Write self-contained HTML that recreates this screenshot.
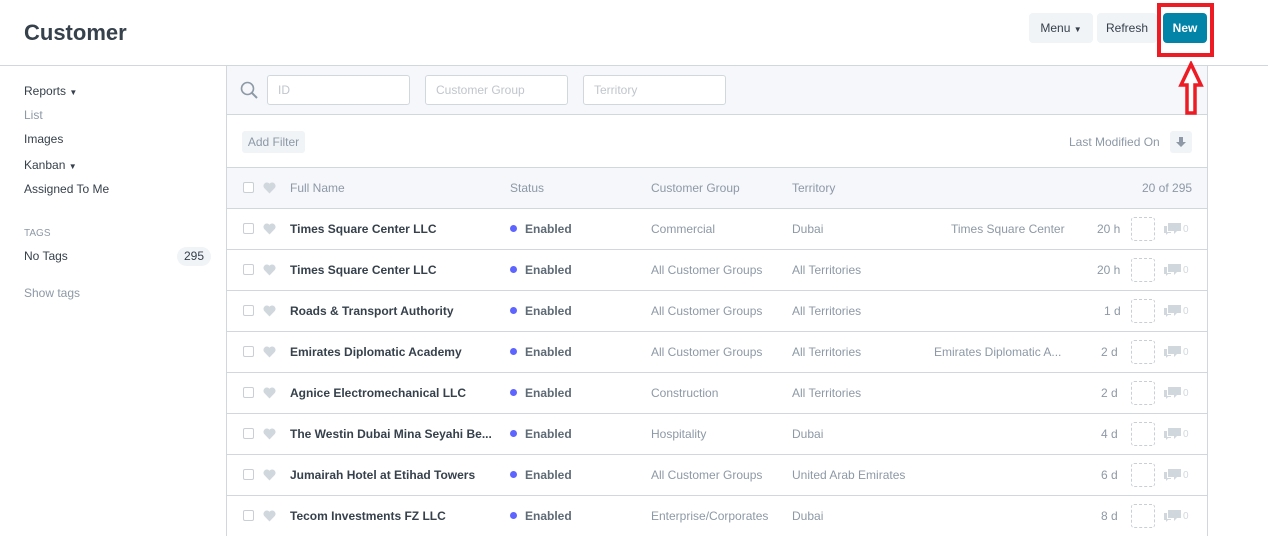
<!DOCTYPE html>
<html><head><style>
*{box-sizing:border-box;margin:0;padding:0}
body{width:1268px;height:535px;overflow:hidden;background:#fff;font-family:"Liberation Sans",sans-serif;font-size:12px;color:#36414c;position:relative}
.a{position:absolute;white-space:nowrap}
.btn{position:absolute;top:13px;height:30px;border-radius:4px;background:#f0f4f7;color:#36414c;font-size:12px;line-height:30px;text-align:center}
.inp{position:absolute;top:75px;height:30px;border:1px solid #d1d8dd;border-radius:3px;background:#fff;color:#c0c6cc;line-height:28px;padding-left:10px;font-size:12px}
.row{position:absolute;left:227px;width:980px;height:41px;border-top:1px solid #d1d8dd}
.cb{position:absolute;left:16px;top:14px;width:11px;height:11px;border:1px solid #c8cfd5;border-radius:2px;background:#fff}
.ht{position:absolute;left:36px;top:14px}
.row .a{top:13px}
.nm{left:63px;font-weight:bold;color:#36414c}
.st{left:283px;font-weight:bold;color:#5e6a75}
.st:before{content:"";display:inline-block;width:7px;height:7px;border-radius:50%;background:#5e64ff;margin-right:8px;vertical-align:1px}
.g{color:#8d99a6}
.dash{position:absolute;left:904px;top:8px;width:24px;height:24px;border:1px dashed #c8cfd5;border-radius:3px}
.cm{position:absolute;left:937px;top:14px}
.z{position:absolute;left:956px;top:15px;color:#d1d8dd;font-size:10px}
</style></head><body>
<div class="a" style="left:24px;top:20px;font-size:22px;font-weight:bold;color:#36414c">Customer</div>
<div class="btn" style="left:1029px;width:64px">Menu <span style="font-size:8px">▼</span></div>
<div class="btn" style="left:1097px;width:60px">Refresh</div>
<div class="btn" style="left:1163px;width:44px;background:#0283a8;color:#fff;font-weight:bold">New</div>
<div class="a" style="left:1157px;top:3px;width:57px;height:54px;border:4px solid #ed1c24"></div>
<div class="a" style="left:0;top:65px;width:1268px;height:1px;background:#d1d8dd"></div>

<div class="a" style="left:24px;top:84px">Reports <span style="font-size:8px">▼</span></div>
<div class="a g" style="left:24px;top:108px">List</div>
<div class="a" style="left:24px;top:132px">Images</div>
<div class="a" style="left:24px;top:158px">Kanban <span style="font-size:8px">▼</span></div>
<div class="a" style="left:24px;top:182px">Assigned To Me</div>
<div class="a g" style="left:24px;top:228px;font-size:10px">TAGS</div>
<div class="a" style="left:24px;top:249px">No Tags</div>
<div class="a" style="left:177px;top:247px;width:34px;height:19px;border-radius:10px;background:#f0f4f7;text-align:center;line-height:19px">295</div>
<div class="a g" style="left:24px;top:286px">Show tags</div>

<div class="a" style="left:226px;top:66px;width:982px;height:470px;border-left:1px solid #d1d8dd;border-right:1px solid #d1d8dd"></div>
<div class="a" style="left:227px;top:66px;width:980px;height:49px;background:#f5f7fa;border-bottom:1px solid #d1d8dd"></div>
<svg class="a" style="left:240px;top:81px" width="19" height="19" viewBox="0 0 19 19"><circle cx="7.5" cy="7.5" r="6" fill="none" stroke="#8d99a6" stroke-width="1.6"/><path d="M12 12 L17 17" stroke="#8d99a6" stroke-width="2"/></svg>
<div class="inp" style="left:267px;width:143px">ID</div>
<div class="inp" style="left:425px;width:143px">Customer Group</div>
<div class="inp" style="left:583px;width:143px">Territory</div>
<div class="a" style="left:242px;top:131px;width:63px;height:22px;background:#f0f4f7;border-radius:3px;color:#8d99a6;line-height:22px;text-align:center">Add Filter</div>
<div class="a g" style="left:1069px;top:135px">Last Modified On</div>
<div class="a" style="left:1170px;top:131px;width:22px;height:22px;background:#f0f4f7;border-radius:3px"><svg style="position:absolute;left:6px;top:6px" width="10" height="10" viewBox="0 0 10 10"><path d="M3 0h4v5h3l-5 5-5-5h3z" fill="#8d99a6"/></svg></div>

<div class="row" style="top:167px;height:41px;background:#f5f7fa">
<div class="cb"></div><svg class="ht" width="13" height="12" viewBox="0 0 13 12"><path d="M6.5 11.5 L1.2 6 A3 3 0 0 1 6.5 1.8 A3 3 0 0 1 11.8 6 Z" fill="#d1d8dd"/></svg>
<div class="a g" style="left:63px">Full Name</div><div class="a g" style="left:283px">Status</div><div class="a g" style="left:424px">Customer Group</div><div class="a g" style="left:565px">Territory</div><div class="a g" style="left:915px">20 of 295</div>
</div>

<div class="row" style="top:208px"><div class="cb"></div><svg class="ht" width="13" height="12" viewBox="0 0 13 12"><path d="M6.5 11.5 L1.2 6 A3 3 0 0 1 6.5 1.8 A3 3 0 0 1 11.8 6 Z" fill="#d1d8dd"/></svg><div class="a nm">Times Square Center LLC</div><div class="a st">Enabled</div><div class="a g" style="left:424px">Commercial</div><div class="a g" style="left:565px">Dubai</div><div class="a g" style="left:724px">Times Square Center</div><div class="a g" style="left:870px">20 h</div><div class="dash"></div><svg class="cm" width="17" height="12" viewBox="0 0 17 12"><path d="M4 0h13v8h-4l-3 3v-3h-6z M0 3h3v6h4v1h-3l-2 2v-2h-2z" fill="#d1d8dd"/></svg><div class="z">0</div></div>
<div class="row" style="top:249px"><div class="cb"></div><svg class="ht" width="13" height="12" viewBox="0 0 13 12"><path d="M6.5 11.5 L1.2 6 A3 3 0 0 1 6.5 1.8 A3 3 0 0 1 11.8 6 Z" fill="#d1d8dd"/></svg><div class="a nm">Times Square Center LLC</div><div class="a st">Enabled</div><div class="a g" style="left:424px">All Customer Groups</div><div class="a g" style="left:565px">All Territories</div><div class="a g" style="left:870px">20 h</div><div class="dash"></div><svg class="cm" width="17" height="12" viewBox="0 0 17 12"><path d="M4 0h13v8h-4l-3 3v-3h-6z M0 3h3v6h4v1h-3l-2 2v-2h-2z" fill="#d1d8dd"/></svg><div class="z">0</div></div>
<div class="row" style="top:290px"><div class="cb"></div><svg class="ht" width="13" height="12" viewBox="0 0 13 12"><path d="M6.5 11.5 L1.2 6 A3 3 0 0 1 6.5 1.8 A3 3 0 0 1 11.8 6 Z" fill="#d1d8dd"/></svg><div class="a nm">Roads &amp; Transport Authority</div><div class="a st">Enabled</div><div class="a g" style="left:424px">All Customer Groups</div><div class="a g" style="left:565px">All Territories</div><div class="a g" style="left:877px">1 d</div><div class="dash"></div><svg class="cm" width="17" height="12" viewBox="0 0 17 12"><path d="M4 0h13v8h-4l-3 3v-3h-6z M0 3h3v6h4v1h-3l-2 2v-2h-2z" fill="#d1d8dd"/></svg><div class="z">0</div></div>
<div class="row" style="top:331px"><div class="cb"></div><svg class="ht" width="13" height="12" viewBox="0 0 13 12"><path d="M6.5 11.5 L1.2 6 A3 3 0 0 1 6.5 1.8 A3 3 0 0 1 11.8 6 Z" fill="#d1d8dd"/></svg><div class="a nm">Emirates Diplomatic Academy</div><div class="a st">Enabled</div><div class="a g" style="left:424px">All Customer Groups</div><div class="a g" style="left:565px">All Territories</div><div class="a g" style="left:707px">Emirates Diplomatic A...</div><div class="a g" style="left:874px">2 d</div><div class="dash"></div><svg class="cm" width="17" height="12" viewBox="0 0 17 12"><path d="M4 0h13v8h-4l-3 3v-3h-6z M0 3h3v6h4v1h-3l-2 2v-2h-2z" fill="#d1d8dd"/></svg><div class="z">0</div></div>
<div class="row" style="top:372px"><div class="cb"></div><svg class="ht" width="13" height="12" viewBox="0 0 13 12"><path d="M6.5 11.5 L1.2 6 A3 3 0 0 1 6.5 1.8 A3 3 0 0 1 11.8 6 Z" fill="#d1d8dd"/></svg><div class="a nm">Agnice Electromechanical LLC</div><div class="a st">Enabled</div><div class="a g" style="left:424px">Construction</div><div class="a g" style="left:565px">All Territories</div><div class="a g" style="left:874px">2 d</div><div class="dash"></div><svg class="cm" width="17" height="12" viewBox="0 0 17 12"><path d="M4 0h13v8h-4l-3 3v-3h-6z M0 3h3v6h4v1h-3l-2 2v-2h-2z" fill="#d1d8dd"/></svg><div class="z">0</div></div>
<div class="row" style="top:413px"><div class="cb"></div><svg class="ht" width="13" height="12" viewBox="0 0 13 12"><path d="M6.5 11.5 L1.2 6 A3 3 0 0 1 6.5 1.8 A3 3 0 0 1 11.8 6 Z" fill="#d1d8dd"/></svg><div class="a nm">The Westin Dubai Mina Seyahi Be...</div><div class="a st">Enabled</div><div class="a g" style="left:424px">Hospitality</div><div class="a g" style="left:565px">Dubai</div><div class="a g" style="left:874px">4 d</div><div class="dash"></div><svg class="cm" width="17" height="12" viewBox="0 0 17 12"><path d="M4 0h13v8h-4l-3 3v-3h-6z M0 3h3v6h4v1h-3l-2 2v-2h-2z" fill="#d1d8dd"/></svg><div class="z">0</div></div>
<div class="row" style="top:454px"><div class="cb"></div><svg class="ht" width="13" height="12" viewBox="0 0 13 12"><path d="M6.5 11.5 L1.2 6 A3 3 0 0 1 6.5 1.8 A3 3 0 0 1 11.8 6 Z" fill="#d1d8dd"/></svg><div class="a nm">Jumairah Hotel at Etihad Towers</div><div class="a st">Enabled</div><div class="a g" style="left:424px">All Customer Groups</div><div class="a g" style="left:565px">United Arab Emirates</div><div class="a g" style="left:874px">6 d</div><div class="dash"></div><svg class="cm" width="17" height="12" viewBox="0 0 17 12"><path d="M4 0h13v8h-4l-3 3v-3h-6z M0 3h3v6h4v1h-3l-2 2v-2h-2z" fill="#d1d8dd"/></svg><div class="z">0</div></div>
<div class="row" style="top:495px"><div class="cb"></div><svg class="ht" width="13" height="12" viewBox="0 0 13 12"><path d="M6.5 11.5 L1.2 6 A3 3 0 0 1 6.5 1.8 A3 3 0 0 1 11.8 6 Z" fill="#d1d8dd"/></svg><div class="a nm">Tecom Investments FZ LLC</div><div class="a st">Enabled</div><div class="a g" style="left:424px">Enterprise/Corporates</div><div class="a g" style="left:565px">Dubai</div><div class="a g" style="left:874px">8 d</div><div class="dash"></div><svg class="cm" width="17" height="12" viewBox="0 0 17 12"><path d="M4 0h13v8h-4l-3 3v-3h-6z M0 3h3v6h4v1h-3l-2 2v-2h-2z" fill="#d1d8dd"/></svg><div class="z">0</div></div>

<svg class="a" style="left:1178px;top:61px;z-index:5" width="26" height="56" viewBox="0 0 26 56"><path d="M13 3 L23 24 L17 24 L17 52 L9 52 L9 24 L3 24 Z" fill="#fff" stroke="#ed1c24" stroke-width="3.5" stroke-linejoin="miter"/></svg>
</body></html>
